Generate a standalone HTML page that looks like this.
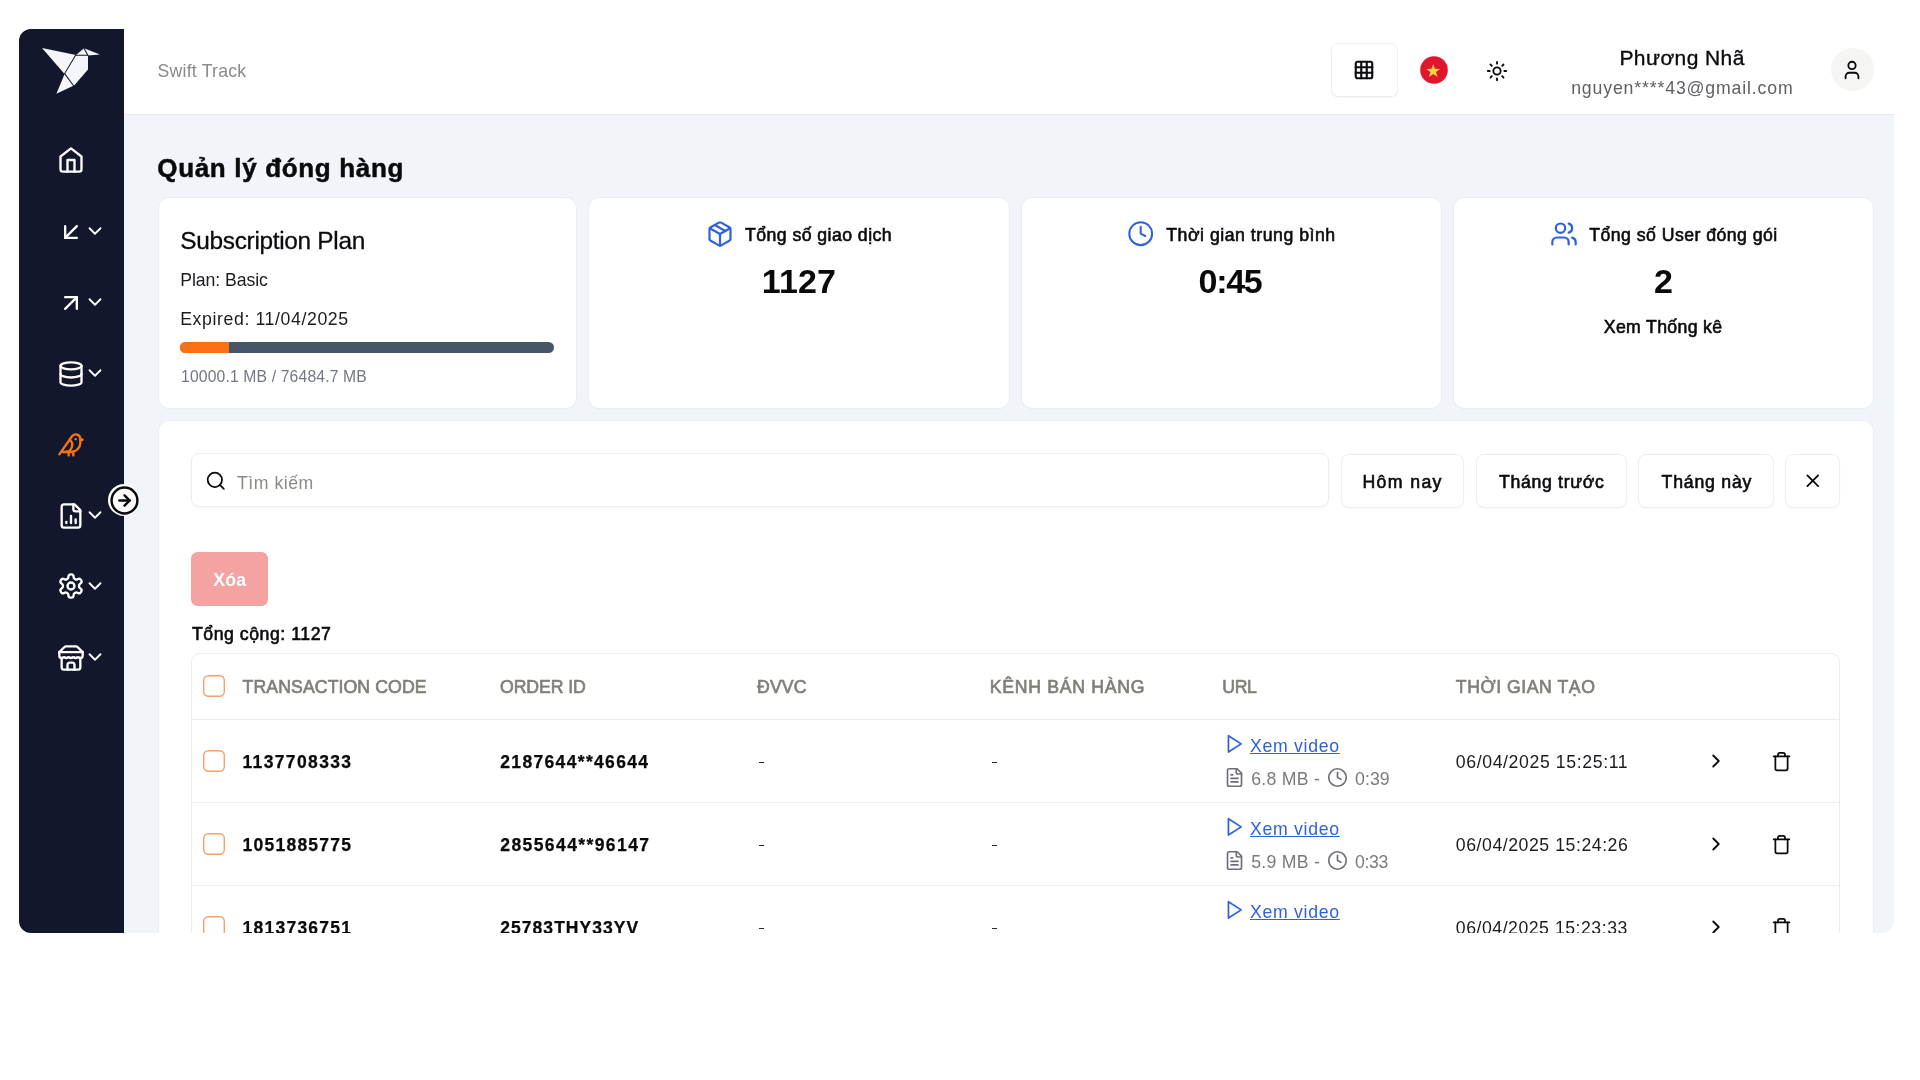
<!DOCTYPE html>
<html lang="vi">
<head>
<meta charset="utf-8">
<title>Swift Track - Quản lý đóng hàng</title>
<style>
*{box-sizing:border-box;margin:0;padding:0}
html,body{width:1920px;height:1080px;background:#fff;overflow:hidden}
body{font-family:"Liberation Sans","DejaVu Sans",sans-serif;color:#0b0b0f;position:relative}
#app{position:absolute;left:19px;top:29px;width:1875px;height:904px;overflow:hidden;border-radius:12px 0 12px 12px;background:#f1f5f9}
#in{position:absolute;left:-19px;top:-29px;width:1920px;height:1080px;will-change:transform}
.abs{position:absolute}
.t{position:absolute;white-space:nowrap;line-height:1;font-weight:400;text-decoration:none}
svg{position:absolute;overflow:visible}
.card{background:#fff;border-radius:10px;box-shadow:0 0 0 1px rgba(226,232,240,.45),0 1px 2px rgba(15,23,42,.03)}
.btn{background:#fff;border:1px solid #eeeef1;border-radius:8px;box-shadow:0 1px 2px rgba(0,0,0,.03)}
.cb{box-shadow:inset 0 0 0 1.4px #f1a26c;border-radius:5.5px;background:#fff}
.hl{background:#e8eaee;height:1px}
</style>
</head>
<body>

<div id="app"><div id="in">
<aside class="g-sidebar">
<div class="abs" style="left:19px;top:29px;width:105px;height:904px;background:#12172b"></div>
<svg style="left:36px;top:40px" width="72" height="60" viewBox="36 40 72 60"><polygon points="42,48 76,55 84,48.2 100,54.6 88,55.4 88,69.5 74.4,85.2 56.4,93.7 64.6,74" fill="#f4f5fa"/><g stroke="#12172b" stroke-width="1.05" fill="none" stroke-linecap="round"><path d="M75.6 55.2 64.6 73.6 73.6 85.8"/><path d="M76.4 55.2H88"/><path d="M83.9 48.2 88 55.6"/></g></svg>
<svg style="left:56.70px;top:146.30px" width="28" height="28" viewBox="0 0 24 24" fill="none" stroke="#fff" stroke-width="2" stroke-linecap="round" stroke-linejoin="round"><path d="m3 9 9-7 9 7v11a2 2 0 0 1-2 2H5a2 2 0 0 1-2-2z"/><polyline points="9 22 9 12 15 12 15 22"/></svg>
<svg style="left:56.70px;top:217.70px" width="28" height="28" viewBox="0 0 24 24" fill="none" stroke="#fff" stroke-width="2" stroke-linecap="round" stroke-linejoin="round"><path d="M17 7 7 17"/><path d="M17 17H7V7"/></svg>
<svg style="left:83.90px;top:220.10px" width="22" height="22" viewBox="0 0 24 24" fill="none" stroke="#fff" stroke-width="2" stroke-linecap="round" stroke-linejoin="round"><path d="m6 9 6 6 6-6"/></svg>
<svg style="left:56.70px;top:288.50px" width="28" height="28" viewBox="0 0 24 24" fill="none" stroke="#fff" stroke-width="2" stroke-linecap="round" stroke-linejoin="round"><path d="M7 7h10v10"/><path d="M7 17 17 7"/></svg>
<svg style="left:83.90px;top:290.90px" width="22" height="22" viewBox="0 0 24 24" fill="none" stroke="#fff" stroke-width="2" stroke-linecap="round" stroke-linejoin="round"><path d="m6 9 6 6 6-6"/></svg>
<svg style="left:56.70px;top:359.70px" width="28" height="28" viewBox="0 0 24 24" fill="none" stroke="#fff" stroke-width="2" stroke-linecap="round" stroke-linejoin="round"><ellipse cx="12" cy="5" rx="9" ry="3"/><path d="M3 5V19A9 3 0 0 0 21 19V5"/><path d="M3 12A9 3 0 0 0 21 12"/></svg>
<svg style="left:83.90px;top:362.10px" width="22" height="22" viewBox="0 0 24 24" fill="none" stroke="#fff" stroke-width="2" stroke-linecap="round" stroke-linejoin="round"><path d="m6 9 6 6 6-6"/></svg>
<svg style="left:56.70px;top:430.50px" width="28" height="28" viewBox="0 0 24 24" fill="none" stroke="#f97316" stroke-width="2" stroke-linecap="round" stroke-linejoin="round"><path d="M16 7h.01"/><path d="M3.4 18H12a8 8 0 0 0 8-8V7a4 4 0 0 0-7.28-2.3L2 20"/><path d="m20 7 2 .5-2 .5"/><path d="M10 18v3"/><path d="M14 17.75V21"/><path d="M7 18a6 6 0 0 0 3.84-10.61"/></svg>
<svg style="left:56.70px;top:501.50px" width="28" height="28" viewBox="0 0 24 24" fill="none" stroke="#fff" stroke-width="2" stroke-linecap="round" stroke-linejoin="round"><path d="M15 2H6a2 2 0 0 0-2 2v16a2 2 0 0 0 2 2h12a2 2 0 0 0 2-2V7Z"/><path d="M14 2v4a2 2 0 0 0 2 2h4"/><path d="M8 18v-1"/><path d="M12 18v-6"/><path d="M16 18v-3"/></svg>
<svg style="left:83.90px;top:503.90px" width="22" height="22" viewBox="0 0 24 24" fill="none" stroke="#fff" stroke-width="2" stroke-linecap="round" stroke-linejoin="round"><path d="m6 9 6 6 6-6"/></svg>
<svg style="left:56.70px;top:572.30px" width="28" height="28" viewBox="0 0 24 24" fill="none" stroke="#fff" stroke-width="2" stroke-linecap="round" stroke-linejoin="round"><path d="M12.22 2h-.44a2 2 0 0 0-2 2v.18a2 2 0 0 1-1 1.73l-.43.25a2 2 0 0 1-2 0l-.15-.08a2 2 0 0 0-2.73.73l-.22.38a2 2 0 0 0 .73 2.73l.15.1a2 2 0 0 1 1 1.72v.51a2 2 0 0 1-1 1.74l-.15.09a2 2 0 0 0-.73 2.73l.22.38a2 2 0 0 0 2.73.73l.15-.08a2 2 0 0 1 2 0l.43.25a2 2 0 0 1 1 1.73V20a2 2 0 0 0 2 2h.44a2 2 0 0 0 2-2v-.18a2 2 0 0 1 1-1.73l.43-.25a2 2 0 0 1 2 0l.15.08a2 2 0 0 0 2.73-.73l.22-.39a2 2 0 0 0-.73-2.73l-.15-.08a2 2 0 0 1-1-1.74v-.5a2 2 0 0 1 1-1.74l.15-.09a2 2 0 0 0 .73-2.73l-.22-.38a2 2 0 0 0-2.73-.73l-.15.08a2 2 0 0 1-2 0l-.43-.25a2 2 0 0 1-1-1.73V4a2 2 0 0 0-2-2z"/><circle cx="12" cy="12" r="3"/></svg>
<svg style="left:83.90px;top:574.70px" width="22" height="22" viewBox="0 0 24 24" fill="none" stroke="#fff" stroke-width="2" stroke-linecap="round" stroke-linejoin="round"><path d="m6 9 6 6 6-6"/></svg>
<svg style="left:56.70px;top:643.50px" width="28" height="28" viewBox="0 0 24 24" fill="none" stroke="#fff" stroke-width="2" stroke-linecap="round" stroke-linejoin="round"><path d="m2 7 4.41-4.41A2 2 0 0 1 7.83 2h8.34a2 2 0 0 1 1.42.59L22 7"/><path d="M4 12v8a2 2 0 0 0 2 2h12a2 2 0 0 0 2-2v-8"/><path d="M15 22v-4a2 2 0 0 0-2-2h-2a2 2 0 0 0-2 2v4"/><path d="M2 7h20"/><path d="M22 7v3a2 2 0 0 1-2 2a2.7 2.7 0 0 1-1.59-.63.7.7 0 0 0-.82 0A2.7 2.7 0 0 1 16 12a2.7 2.7 0 0 1-1.59-.63.7.7 0 0 0-.82 0A2.7 2.7 0 0 1 12 12a2.7 2.7 0 0 1-1.59-.63.7.7 0 0 0-.82 0A2.7 2.7 0 0 1 8 12a2.7 2.7 0 0 1-1.59-.63.7.7 0 0 0-.82 0A2.7 2.7 0 0 1 4 12a2 2 0 0 1-2-2V7"/></svg>
<svg style="left:83.90px;top:645.90px" width="22" height="22" viewBox="0 0 24 24" fill="none" stroke="#fff" stroke-width="2" stroke-linecap="round" stroke-linejoin="round"><path d="m6 9 6 6 6-6"/></svg>
</aside>
<header class="g-header">
<div class="abs" style="left:124px;top:29px;width:1770px;height:85px;background:#fff"></div>
<div class="abs" style="left:124px;top:114px;width:1770px;height:1px;background:#e6e9ee"></div>
<div class="abs" style="left:1330.7px;top:43.2px;width:67.1px;height:54.3px;background:#fff;border:1px solid #efeff1;border-radius:7px;box-shadow:0 1px 2px rgba(0,0,0,.04)"></div>
<svg style="left:1353.10px;top:59.10px" width="22" height="22" viewBox="0 0 24 24" fill="none" stroke="#0b0b0f" stroke-width="2.3" stroke-linecap="round" stroke-linejoin="round"><rect width="18" height="18" x="3" y="3" rx="2"/><path d="M3 9h18"/><path d="M3 15h18"/><path d="M9 3v18"/><path d="M15 3v18"/></svg>
<svg style="left:1419.9px;top:55.8px" width="28" height="28" viewBox="0 0 28 28"><circle cx="14" cy="14" r="13.8" fill="#e0162c"/><polygon points="13.20,7.93 14.90,12.85 20.11,12.95 15.96,16.10 17.47,21.08 13.20,18.10 8.93,21.08 10.44,16.10 6.29,12.95 11.50,12.85" fill="#fbd44a"/></svg>
<svg style="left:1486.10px;top:60.05px" width="22" height="22" viewBox="0 0 24 24" fill="none" stroke="#0b0b0f" stroke-width="2" stroke-linecap="round" stroke-linejoin="round"><circle cx="12" cy="12" r="4"/><path d="M12 2v2"/><path d="M12 20v2"/><path d="m4.93 4.93 1.41 1.41"/><path d="m17.66 17.66 1.41 1.41"/><path d="M2 12h2"/><path d="M20 12h2"/><path d="m6.34 17.66-1.41 1.41"/><path d="m19.07 4.93-1.41 1.41"/></svg>
<div class="abs" style="left:1830.6px;top:48px;width:43px;height:43px;background:#f5f5f4;border-radius:50%"></div>
<svg style="left:1840.70px;top:59.00px" width="22" height="22" viewBox="0 0 24 24" fill="none" stroke="#0b0b0f" stroke-width="2" stroke-linecap="round" stroke-linejoin="round"><path d="M19 21v-2a4 4 0 0 0-4-4H9a4 4 0 0 0-4 4v2"/><circle cx="12" cy="7" r="4"/></svg>
<span class="t" style="left:157.60px;top:63px;font-size:17.7px;color:#8b8b8b;letter-spacing:0.204px;">Swift Track</span>
<span class="t" style="left:1619.40px;top:47px;font-size:21px;color:#0b0b0f;letter-spacing:0.416px;-webkit-text-stroke:0.35px #0b0b0f;">Phương Nhã</span>
<span class="t" style="left:1571.20px;top:80px;font-size:17.7px;color:#5f5f66;letter-spacing:0.845px;">nguyen****43@gmail.com</span>
</header>
<div class="g-title">
<h1 class="t" style="left:157.30px;top:155px;font-size:26px;color:#0a0a0c;font-weight:700;letter-spacing:0.665px;-webkit-text-stroke:0.5px #0a0a0c;">Quản lý đóng hàng</h1>
</div>
<section class="g-cards">
<div class="abs card" style="left:158.5px;top:198px;width:417px;height:209.5px"></div>
<div class="abs card" style="left:588.5px;top:198px;width:420px;height:209.5px"></div>
<div class="abs card" style="left:1021.5px;top:198px;width:419.5px;height:209.5px"></div>
<div class="abs card" style="left:1453.5px;top:198px;width:419px;height:209.5px"></div>
<div class="abs" style="left:180px;top:342px;width:373.8px;height:11px;background:#475569;border-radius:6px;overflow:hidden"></div>
<div class="abs" style="left:180px;top:342px;width:48.9px;height:11px;background:#f97316;border-radius:6px 0 0 6px"></div>
<svg style="left:706.30px;top:219.70px" width="28" height="28" viewBox="0 0 24 24" fill="none" stroke="#2f62d9" stroke-width="1.9" stroke-linecap="round" stroke-linejoin="round"><path d="m7.5 4.27 9 5.15"/><path d="M21 8a2 2 0 0 0-1-1.73l-7-4a2 2 0 0 0-2 0l-7 4A2 2 0 0 0 3 8v8a2 2 0 0 0 1 1.73l7 4a2 2 0 0 0 2 0l7-4A2 2 0 0 0 21 16Z"/><path d="m3.3 7 8.7 5 8.7-5"/><path d="M12 22V12"/></svg>
<svg style="left:1126.60px;top:219.90px" width="27.4" height="27.4" viewBox="0 0 24 24" fill="none" stroke="#2f62d9" stroke-width="1.8" stroke-linecap="round" stroke-linejoin="round"><circle cx="12" cy="12" r="10"/><polyline points="12 6 12 12 16 14"/></svg>
<svg style="left:1549.50px;top:219.50px" width="28" height="28" viewBox="0 0 24 24" fill="none" stroke="#2f62d9" stroke-width="1.9" stroke-linecap="round" stroke-linejoin="round"><path d="M16 21v-2a4 4 0 0 0-4-4H6a4 4 0 0 0-4 4v2"/><circle cx="9" cy="7" r="4"/><path d="M22 21v-2a4 4 0 0 0-3-3.87"/><path d="M16 3.13a4 4 0 0 1 0 7.75"/></svg>
<span class="t" style="left:180.30px;top:229px;font-size:24.4px;color:#0b0b0f;letter-spacing:-0.303px;-webkit-text-stroke:0.3px #0b0b0f;">Subscription Plan</span>
<span class="t" style="left:180.20px;top:272px;font-size:17.7px;color:#1b1b20;letter-spacing:-0.084px;">Plan: Basic</span>
<span class="t" style="left:180.20px;top:311px;font-size:17.7px;color:#1b1b20;letter-spacing:0.607px;">Expired: 11/04/2025</span>
<span class="t" style="left:181.00px;top:369px;font-size:15.7px;color:#727784;letter-spacing:0.159px;">10000.1 MB / 76484.7 MB</span>
<span class="t" style="left:745.00px;top:227px;font-size:17.7px;color:#0b0b0f;letter-spacing:0.438px;-webkit-text-stroke:0.6px #0b0b0f;">Tổng số giao dịch</span>
<span class="t" style="left:761.80px;top:264px;font-size:34px;color:#0a0a0c;font-weight:700;letter-spacing:0.116px;">1127</span>
<span class="t" style="left:1166.30px;top:227px;font-size:17.7px;color:#0b0b0f;letter-spacing:0.513px;-webkit-text-stroke:0.6px #0b0b0f;">Thời gian trung bình</span>
<span class="t" style="left:1198.50px;top:264px;font-size:34px;color:#0a0a0c;font-weight:700;letter-spacing:-1.280px;">0:45</span>
<span class="t" style="left:1589.30px;top:227px;font-size:17.7px;color:#0b0b0f;letter-spacing:0.449px;-webkit-text-stroke:0.6px #0b0b0f;">Tổng số User đóng gói</span>
<span class="t" style="left:1654.00px;top:264px;font-size:34px;color:#0a0a0c;font-weight:700;letter-spacing:-0.700px;">2</span>
<span class="t" style="left:1603.80px;top:319px;font-size:17.7px;color:#0b0b0f;letter-spacing:0.319px;-webkit-text-stroke:0.6px #0b0b0f;">Xem Thống kê</span>
</section>
<section class="g-panel">
<div class="abs card" style="left:158.5px;top:420.7px;width:1714px;height:560px"></div>
<div class="abs" style="left:191px;top:453.3px;width:1138px;height:54px;background:#fff;border:1px solid #ececef;border-radius:8px;box-shadow:0 1px 2px rgba(0,0,0,.03)"></div>
<svg style="left:204.55px;top:469.65px" width="21.5" height="21.5" viewBox="0 0 24 24" fill="none" stroke="#0b0b0f" stroke-width="2" stroke-linecap="round" stroke-linejoin="round"><circle cx="11" cy="11" r="8"/><path d="m21 21-4.3-4.3"/></svg>
<div class="abs btn" style="left:1340.5px;top:453.5px;width:123.5px;height:54px"></div>
<div class="abs btn" style="left:1475.5px;top:453.5px;width:151.29999999999995px;height:54px"></div>
<div class="abs btn" style="left:1638.3px;top:453.5px;width:135.70000000000005px;height:54px"></div>
<div class="abs btn" style="left:1785.3px;top:453.5px;width:54.40000000000009px;height:54px"></div>
<svg style="left:1801.65px;top:470.35px" width="21.5" height="21.5" viewBox="0 0 24 24" fill="none" stroke="#0b0b0f" stroke-width="2" stroke-linecap="round" stroke-linejoin="round"><path d="M18 6 6 18"/><path d="m6 6 12 12"/></svg>
<div class="abs" style="left:191.3px;top:551.7px;width:76.3px;height:54px;background:#f5a2a2;border-radius:6.5px"></div>
<span class="t" style="left:237.00px;top:475px;font-size:17.7px;color:#8b8b86;letter-spacing:0.503px;">Tìm kiếm</span>
<span class="t" style="left:1362.40px;top:474px;font-size:17.7px;color:#0b0b0f;letter-spacing:1.378px;-webkit-text-stroke:0.6px #0b0b0f;">Hôm nay</span>
<span class="t" style="left:1499.00px;top:474px;font-size:17.7px;color:#0b0b0f;letter-spacing:0.669px;-webkit-text-stroke:0.6px #0b0b0f;">Tháng trước</span>
<span class="t" style="left:1661.60px;top:474px;font-size:17.7px;color:#0b0b0f;letter-spacing:0.782px;-webkit-text-stroke:0.6px #0b0b0f;">Tháng này</span>
<span class="t" style="left:213.30px;top:572px;font-size:17.7px;color:#fff;font-weight:700;letter-spacing:0.199px;">Xóa</span>
<span class="t" style="left:192.00px;top:626px;font-size:17.7px;color:#0b0b0f;letter-spacing:0.528px;-webkit-text-stroke:0.6px #0b0b0f;">Tổng cộng: 1127</span>
</section>
<section class="g-table">
<div class="abs" style="left:191px;top:652.7px;width:1649px;height:330px;border:1px solid #ececef;border-radius:9px;background:#fff"></div>
<div class="abs" style="left:192px;top:719.3px;width:1647px;height:1px;background:#ecedf1"></div>
<div class="abs" style="left:192px;top:802.3px;width:1647px;height:1px;background:#ecedf1"></div>
<div class="abs" style="left:192px;top:885.3px;width:1647px;height:1px;background:#ecedf1"></div>
<div class="abs cb" style="left:203px;top:675.3px;width:22px;height:22px"></div>
<div class="abs cb" style="left:203px;top:749.8px;width:22px;height:22px"></div>
<div class="abs" style="left:758.8px;top:761.6px;width:5.6px;height:1.6px;background:#26262b"></div>
<div class="abs" style="left:991.7px;top:761.6px;width:5.6px;height:1.6px;background:#26262b"></div>
<svg style="left:1222.80px;top:733.30px" width="21.8" height="21.8" viewBox="0 0 24 24" fill="none" stroke="#2f62d9" stroke-width="1.9" stroke-linecap="round" stroke-linejoin="round"><polygon points="6 3 20 12 6 21 6 3"/></svg>
<svg style="left:1223.55px;top:766.50px" width="21" height="21" viewBox="0 0 24 24" fill="none" stroke="#6c6f77" stroke-width="1.9" stroke-linecap="round" stroke-linejoin="round"><path d="M15 2H6a2 2 0 0 0-2 2v16a2 2 0 0 0 2 2h12a2 2 0 0 0 2-2V7Z"/><path d="M14 2v4a2 2 0 0 0 2 2h4"/><path d="M10 9H8"/><path d="M16 13H8"/><path d="M16 17H8"/></svg>
<svg style="left:1326.70px;top:766.50px" width="21" height="21" viewBox="0 0 24 24" fill="none" stroke="#6c6f77" stroke-width="1.9" stroke-linecap="round" stroke-linejoin="round"><circle cx="12" cy="12" r="10"/><polyline points="12 6 12 12 16 14"/></svg>
<svg style="left:1704.50px;top:750.20px" width="22" height="22" viewBox="0 0 24 24" fill="none" stroke="#0b0b0f" stroke-width="2" stroke-linecap="round" stroke-linejoin="round"><path d="m9 18 6-6-6-6"/></svg>
<svg style="left:1770.80px;top:750.50px" width="21" height="21" viewBox="0 0 24 24" fill="none" stroke="#0b0b0f" stroke-width="2" stroke-linecap="round" stroke-linejoin="round"><path d="M3 6h18"/><path d="M19 6v14c0 1-1 2-2 2H7c-1 0-2-1-2-2V6"/><path d="M8 6V4c0-1 1-2 2-2h4c1 0 2 1 2 2v2"/></svg>
<div class="abs cb" style="left:203px;top:832.8px;width:22px;height:22px"></div>
<div class="abs" style="left:758.8px;top:844.6px;width:5.6px;height:1.6px;background:#26262b"></div>
<div class="abs" style="left:991.7px;top:844.6px;width:5.6px;height:1.6px;background:#26262b"></div>
<svg style="left:1222.80px;top:816.30px" width="21.8" height="21.8" viewBox="0 0 24 24" fill="none" stroke="#2f62d9" stroke-width="1.9" stroke-linecap="round" stroke-linejoin="round"><polygon points="6 3 20 12 6 21 6 3"/></svg>
<svg style="left:1223.55px;top:849.50px" width="21" height="21" viewBox="0 0 24 24" fill="none" stroke="#6c6f77" stroke-width="1.9" stroke-linecap="round" stroke-linejoin="round"><path d="M15 2H6a2 2 0 0 0-2 2v16a2 2 0 0 0 2 2h12a2 2 0 0 0 2-2V7Z"/><path d="M14 2v4a2 2 0 0 0 2 2h4"/><path d="M10 9H8"/><path d="M16 13H8"/><path d="M16 17H8"/></svg>
<svg style="left:1326.70px;top:849.50px" width="21" height="21" viewBox="0 0 24 24" fill="none" stroke="#6c6f77" stroke-width="1.9" stroke-linecap="round" stroke-linejoin="round"><circle cx="12" cy="12" r="10"/><polyline points="12 6 12 12 16 14"/></svg>
<svg style="left:1704.50px;top:833.20px" width="22" height="22" viewBox="0 0 24 24" fill="none" stroke="#0b0b0f" stroke-width="2" stroke-linecap="round" stroke-linejoin="round"><path d="m9 18 6-6-6-6"/></svg>
<svg style="left:1770.80px;top:833.50px" width="21" height="21" viewBox="0 0 24 24" fill="none" stroke="#0b0b0f" stroke-width="2" stroke-linecap="round" stroke-linejoin="round"><path d="M3 6h18"/><path d="M19 6v14c0 1-1 2-2 2H7c-1 0-2-1-2-2V6"/><path d="M8 6V4c0-1 1-2 2-2h4c1 0 2 1 2 2v2"/></svg>
<div class="abs cb" style="left:203px;top:915.8px;width:22px;height:22px"></div>
<div class="abs" style="left:758.8px;top:927.6px;width:5.6px;height:1.6px;background:#26262b"></div>
<div class="abs" style="left:991.7px;top:927.6px;width:5.6px;height:1.6px;background:#26262b"></div>
<svg style="left:1222.80px;top:899.30px" width="21.8" height="21.8" viewBox="0 0 24 24" fill="none" stroke="#2f62d9" stroke-width="1.9" stroke-linecap="round" stroke-linejoin="round"><polygon points="6 3 20 12 6 21 6 3"/></svg>
<svg style="left:1223.55px;top:932.50px" width="21" height="21" viewBox="0 0 24 24" fill="none" stroke="#6c6f77" stroke-width="1.9" stroke-linecap="round" stroke-linejoin="round"><path d="M15 2H6a2 2 0 0 0-2 2v16a2 2 0 0 0 2 2h12a2 2 0 0 0 2-2V7Z"/><path d="M14 2v4a2 2 0 0 0 2 2h4"/><path d="M10 9H8"/><path d="M16 13H8"/><path d="M16 17H8"/></svg>
<svg style="left:1326.70px;top:932.50px" width="21" height="21" viewBox="0 0 24 24" fill="none" stroke="#6c6f77" stroke-width="1.9" stroke-linecap="round" stroke-linejoin="round"><circle cx="12" cy="12" r="10"/><polyline points="12 6 12 12 16 14"/></svg>
<svg style="left:1704.50px;top:916.20px" width="22" height="22" viewBox="0 0 24 24" fill="none" stroke="#0b0b0f" stroke-width="2" stroke-linecap="round" stroke-linejoin="round"><path d="m9 18 6-6-6-6"/></svg>
<svg style="left:1770.80px;top:916.50px" width="21" height="21" viewBox="0 0 24 24" fill="none" stroke="#0b0b0f" stroke-width="2" stroke-linecap="round" stroke-linejoin="round"><path d="M3 6h18"/><path d="M19 6v14c0 1-1 2-2 2H7c-1 0-2-1-2-2V6"/><path d="M8 6V4c0-1 1-2 2-2h4c1 0 2 1 2 2v2"/></svg>
<span class="t" style="left:242.50px;top:679px;font-size:17.7px;color:#827f79;letter-spacing:0.088px;-webkit-text-stroke:0.65px #827f79;">TRANSACTION CODE</span>
<span class="t" style="left:500.00px;top:679px;font-size:17.7px;color:#827f79;letter-spacing:-0.101px;-webkit-text-stroke:0.65px #827f79;">ORDER ID</span>
<span class="t" style="left:757.00px;top:679px;font-size:17.7px;color:#827f79;letter-spacing:0.144px;-webkit-text-stroke:0.65px #827f79;">ĐVVC</span>
<span class="t" style="left:989.80px;top:679px;font-size:17.7px;color:#827f79;letter-spacing:0.693px;-webkit-text-stroke:0.65px #827f79;">KÊNH BÁN HÀNG</span>
<span class="t" style="left:1222.30px;top:679px;font-size:17.7px;color:#827f79;letter-spacing:-0.423px;-webkit-text-stroke:0.65px #827f79;">URL</span>
<span class="t" style="left:1455.80px;top:679px;font-size:17.7px;color:#827f79;letter-spacing:0.531px;-webkit-text-stroke:0.65px #827f79;">THỜI GIAN TẠO</span>
<span class="t" style="left:242.50px;top:754px;font-size:17.5px;color:#0a0a0c;font-weight:700;letter-spacing:1.352px;-webkit-text-stroke:0.25px #0a0a0c;">1137708333</span>
<span class="t" style="left:500.30px;top:754px;font-size:17.5px;color:#0a0a0c;font-weight:700;letter-spacing:1.332px;-webkit-text-stroke:0.25px #0a0a0c;">2187644**46644</span>
<a class="t" style="left:1250.00px;top:738px;font-size:17.7px;color:#2f62d9;letter-spacing:0.696px;text-decoration:underline;text-decoration-thickness:1.2px;text-underline-offset:1px;">Xem video</a>
<span class="t" style="left:1251.20px;top:771px;font-size:17.7px;color:#797b80;letter-spacing:0.265px;">6.8 MB -</span>
<span class="t" style="left:1355.00px;top:771px;font-size:17.7px;color:#797b80;letter-spacing:0.071px;">0:39</span>
<span class="t" style="left:1455.80px;top:754px;font-size:17.7px;color:#1b1b20;letter-spacing:0.603px;">06/04/2025 15:25:11</span>
<span class="t" style="left:242.50px;top:837px;font-size:17.5px;color:#0a0a0c;font-weight:700;letter-spacing:1.245px;-webkit-text-stroke:0.25px #0a0a0c;">1051885775</span>
<span class="t" style="left:500.30px;top:837px;font-size:17.5px;color:#0a0a0c;font-weight:700;letter-spacing:1.409px;-webkit-text-stroke:0.25px #0a0a0c;">2855644**96147</span>
<a class="t" style="left:1250.00px;top:821px;font-size:17.7px;color:#2f62d9;letter-spacing:0.696px;text-decoration:underline;text-decoration-thickness:1.2px;text-underline-offset:1px;">Xem video</a>
<span class="t" style="left:1251.20px;top:854px;font-size:17.7px;color:#797b80;letter-spacing:0.265px;">5.9 MB -</span>
<span class="t" style="left:1355.00px;top:854px;font-size:17.7px;color:#797b80;letter-spacing:-0.363px;">0:33</span>
<span class="t" style="left:1455.80px;top:837px;font-size:17.7px;color:#1b1b20;letter-spacing:0.542px;">06/04/2025 15:24:26</span>
<span class="t" style="left:242.50px;top:920px;font-size:17.5px;color:#0a0a0c;font-weight:700;letter-spacing:1.245px;-webkit-text-stroke:0.25px #0a0a0c;">1813736751</span>
<span class="t" style="left:500.30px;top:920px;font-size:17.5px;color:#0a0a0c;font-weight:700;letter-spacing:1.036px;-webkit-text-stroke:0.25px #0a0a0c;">25783THY33YV</span>
<a class="t" style="left:1250.00px;top:904px;font-size:17.7px;color:#2f62d9;letter-spacing:0.696px;text-decoration:underline;text-decoration-thickness:1.2px;text-underline-offset:1px;">Xem video</a>
<span class="t" style="left:1251.20px;top:937px;font-size:17.7px;color:#797b80;letter-spacing:0.265px;">5.2 MB -</span>
<span class="t" style="left:1355.00px;top:937px;font-size:17.7px;color:#797b80;letter-spacing:-0.363px;">0:30</span>
<span class="t" style="left:1455.80px;top:920px;font-size:17.7px;color:#1b1b20;letter-spacing:0.514px;">06/04/2025 15:23:33</span>
</section>
<div class="g-toggle">
<div class="abs" style="left:107.8px;top:484.4px;width:32px;height:32px;background:#fff;border-radius:50%"></div>
<svg style="left:108.60px;top:484.90px" width="31" height="31" viewBox="0 0 24 24" fill="none" stroke="#0b0b0f" stroke-width="1.9" stroke-linecap="round" stroke-linejoin="round"><circle cx="12" cy="12" r="10"/><path d="M8 12h8"/><path d="m12 16 4-4-4-4"/></svg>
</div>
</div></div>
</body>
</html>
